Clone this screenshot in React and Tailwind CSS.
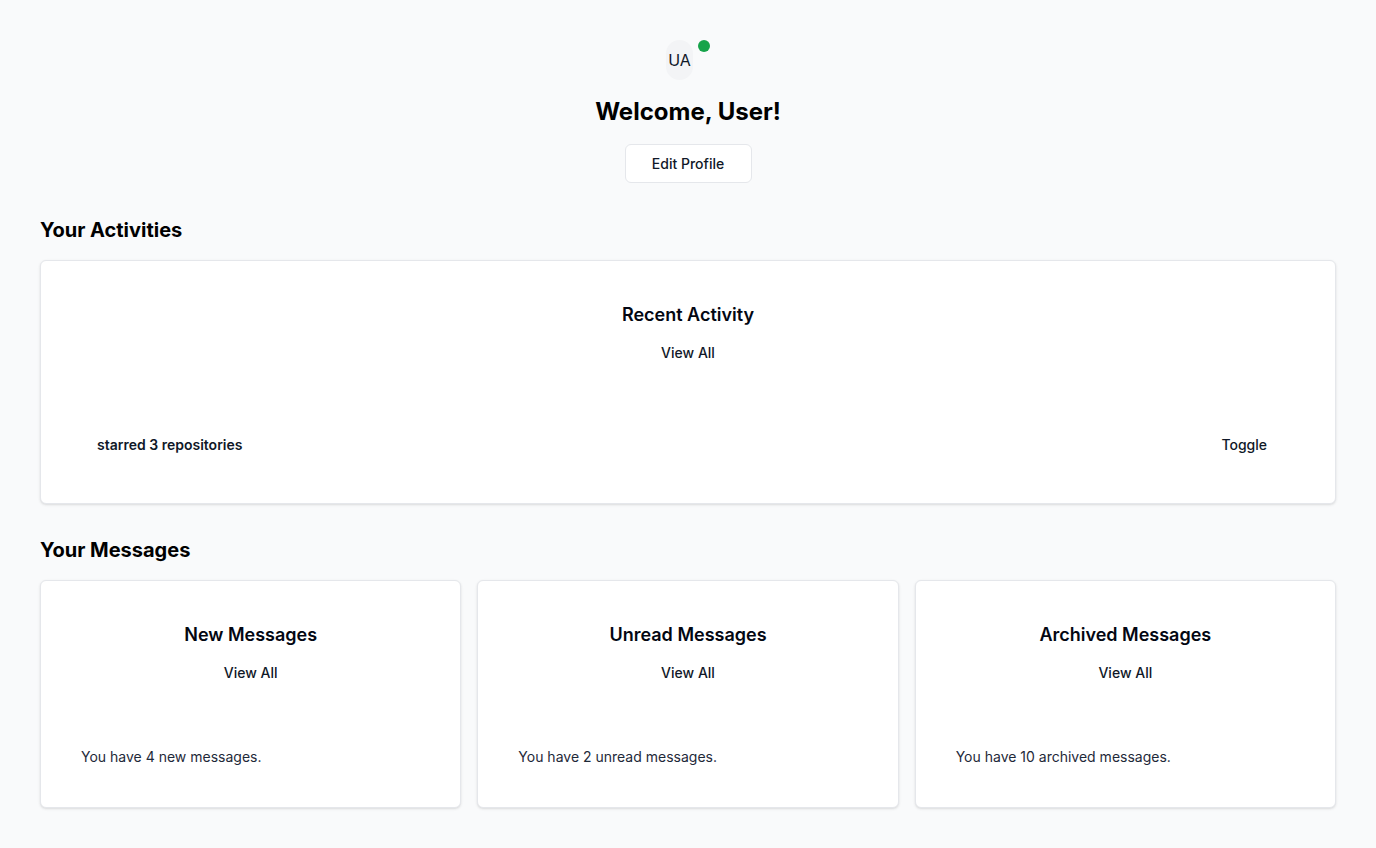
export default function App() {
  const msgs = [
    { t: "New Messages", d: "You have 4 new messages." },
    { t: "Unread Messages", d: "You have 2 unread messages." },
    { t: "Archived Messages", d: "You have 10 archived messages." },
  ];
  return (
    <div className="min-h-[848px] bg-gray-50 px-10 pt-10 pb-10 text-gray-950" style={{ fontFamily: "Inter, 'Noto Sans', sans-serif" }}>
      <div className="flex flex-col items-center">
        <div className="flex h-10 items-start gap-[5px]">
          <div className="flex h-10 w-[27px] items-center justify-center rounded-full bg-gray-100 text-base text-gray-900">UA</div>
          <span className="h-3 w-3 rounded-full bg-[#16a34a]"></span>
        </div>
        <h1 className="mt-4 text-2xl font-bold leading-8 text-black">Welcome, User!</h1>
        <button className="mt-4 h-[39px] w-[127px] rounded-md border border-gray-200 bg-white text-sm font-medium text-gray-900">Edit Profile</button>
      </div>

      <h2 className="mt-[33px] text-xl font-bold leading-7 text-black">Your Activities</h2>
      <div className="mt-4 rounded-md border border-gray-200 bg-white shadow-sm">
        <div className="flex flex-col items-center pt-10">
          <h3 className="text-lg font-semibold leading-7">Recent Activity</h3>
          <button className="mt-[6px] h-9 px-4 text-sm font-medium text-gray-900">View All</button>
        </div>
        <div className="flex items-center justify-between px-14 pt-[64px] pb-[48px]">
          <span className="text-sm font-semibold text-gray-900">starred 3 repositories</span>
          <button className="mr-[12px] text-sm font-medium text-gray-900">Toggle</button>
        </div>
      </div>

      <h2 className="mt-[32px] text-xl font-bold leading-7 text-black">Your Messages</h2>
      <div className="mt-4 grid grid-cols-3 gap-4">
        {msgs.map((m) => (
          <div key={m.t} className="h-[228px] rounded-md border border-gray-200 bg-white shadow-sm">
            <div className="flex flex-col items-center pt-10">
              <h3 className="text-lg font-semibold leading-7">{m.t}</h3>
              <button className="mt-[6px] h-9 px-4 text-sm font-medium text-gray-900">View All</button>
            </div>
            <p className="mt-[56px] px-10 text-sm text-gray-800">{m.d}</p>
          </div>
        ))}
      </div>
    </div>
  );
}
